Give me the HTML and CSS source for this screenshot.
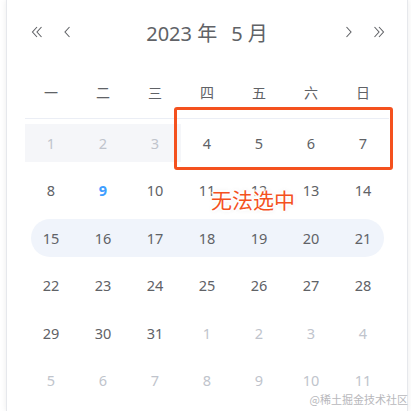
FILE: index.html
```html
<!DOCTYPE html>
<html lang="zh">
<head>
<meta charset="utf-8">
<link rel="stylesheet" href="styles.css">
</head>
<body>
<div class="panel">
  <div class="header">
    <button class="nav" aria-label="前一年">
      <svg width="12" height="12" viewBox="0 0 12 12"><path d="M6 1 L1.5 6 L6 11 M10.5 1 L6 6 L10.5 11" fill="none" stroke="#606266" stroke-width="1.1"/></svg>
    </button>
    <button class="nav" aria-label="上个月">
      <svg width="8" height="12" viewBox="0 0 8 12"><path d="M6.5 1 L2 6 L6.5 11" fill="none" stroke="#606266" stroke-width="1.1"/></svg>
    </button>
    <div class="title"><span>2023 年</span><span class="month">5 月</span></div>
    <button class="nav" aria-label="下个月">
      <svg width="8" height="12" viewBox="0 0 8 12"><path d="M1.5 1 L6 6 L1.5 11" fill="none" stroke="#606266" stroke-width="1.1"/></svg>
    </button>
    <button class="nav" aria-label="后一年">
      <svg width="12" height="12" viewBox="0 0 12 12"><path d="M1.5 1 L6 6 L1.5 11 M6 1 L10.5 6 L6 11" fill="none" stroke="#606266" stroke-width="1.1"/></svg>
    </button>
  </div>

  <div class="grid">
    <div class="weekdays">
      <span>一</span><span>二</span><span>三</span><span>四</span><span>五</span><span>六</span><span>日</span>
    </div>
    <div class="week">
      <span class="day disabled">1</span><span class="day disabled">2</span><span class="day disabled">3</span>
      <span class="day">4</span><span class="day">5</span><span class="day">6</span><span class="day">7</span>
    </div>
    <div class="week">
      <span class="day">8</span><span class="day today">9</span><span class="day">10</span><span class="day">11</span><span class="day">12</span><span class="day">13</span><span class="day">14</span>
    </div>
    <div class="week hover">
      <span class="day">15</span><span class="day">16</span><span class="day">17</span><span class="day">18</span><span class="day">19</span><span class="day">20</span><span class="day">21</span>
    </div>
    <div class="week">
      <span class="day">22</span><span class="day">23</span><span class="day">24</span><span class="day">25</span><span class="day">26</span><span class="day">27</span><span class="day">28</span>
    </div>
    <div class="week">
      <span class="day">29</span><span class="day">30</span><span class="day">31</span><span class="day next">1</span><span class="day next">2</span><span class="day next">3</span><span class="day next">4</span>
    </div>
    <div class="week">
      <span class="day next">5</span><span class="day next">6</span><span class="day next">7</span><span class="day next">8</span><span class="day next">9</span><span class="day next">10</span><span class="day next">11</span>
    </div>
  </div>

  <div class="mark-box"></div>
  <div class="mark-label">无法选中</div>
</div>
<div class="watermark">@稀土掘金技术社区</div>
</body>
</html>
```

FILE: styles.css
```css
* {
  box-sizing: border-box;
}

html, body {
  margin: 0;
  height: 100%;
  background: #ffffff;
  overflow: hidden;
}

body {
  font-family: "Noto Sans", "Noto Sans CJK SC", sans-serif;
  color: #606266;
  position: relative;
}

.panel {
  position: relative;
  margin-left: 6px;
  width: 402px;
  height: 411px;
  background: #ffffff;
  border-left: 1px solid #e6e8ec;
  border-right: 1px solid #e6e8ec;
  box-shadow: 0 0 6px rgba(0, 0, 0, 0.08);
}

.header {
  height: 64px;
  display: flex;
  align-items: center;
  padding: 0 13px 0 15px;
}

.nav {
  border: 0;
  background: none;
  padding: 0;
  width: 30px;
  height: 24px;
  display: flex;
  align-items: center;
  justify-content: center;
  cursor: pointer;
}

.title {
  flex: 1;
  text-align: center;
  font-size: 20px;
  color: #606266;
  padding-right: 2px;
}

.title .month {
  margin-left: 14px;
}

.grid {
  padding: 4px 0 0 18px;
}

.weekdays,
.week {
  display: grid;
  grid-template-columns: repeat(7, 52px);
  width: 364px;
}

.weekdays {
  height: 51px;
  align-items: center;
  border-bottom: 1px solid #ebeef5;
  font-family: "Noto Sans CJK SC", sans-serif;
  font-size: 14px;
  text-align: center;
}

.weekdays span {
  padding-bottom: 3px;
}

.week {
  height: 47.5px;
  align-items: center;
  position: relative;
}

.day {
  height: 38px;
  line-height: 38px;
  text-align: center;
  font-size: 14.5px;
  color: #606266;
  position: relative;
}

.day.disabled {
  background: #f5f6f9;
  color: #c0c4cc;
}

.day.next {
  color: #c0c4cc;
}

.day.today {
  color: #409eff;
  font-weight: 700;
}

.week.hover::before {
  content: "";
  position: absolute;
  left: 6px;
  right: 5px;
  top: 4.75px;
  height: 38px;
  border-radius: 19px;
  background: #f0f4fb;
}

/* annotation over the first week */
.mark-box {
  position: absolute;
  left: 167px;
  top: 107px;
  width: 219px;
  height: 63px;
  border: 3px solid #f4511e;
  border-radius: 3px;
}

.mark-label {
  position: absolute;
  left: 204px;
  top: 185px;
  font-family: "Noto Sans CJK SC", sans-serif;
  font-size: 21px;
  line-height: 28px;
  color: #f4511e;
  text-shadow:
    0 0 2px #fff, 0 0 2px #fff, 0 0 3px #fff,
    2px 0 1px #fff, -2px 0 1px #fff, 0 2px 1px #fff, 0 -2px 1px #fff,
    0 0 5px rgba(0, 0, 0, 0.15);
}

.watermark {
  position: absolute;
  right: 3px;
  bottom: 4px;
  font-family: "Noto Sans CJK SC", sans-serif;
  font-size: 11px;
  color: #b8b8bc;
}
```
